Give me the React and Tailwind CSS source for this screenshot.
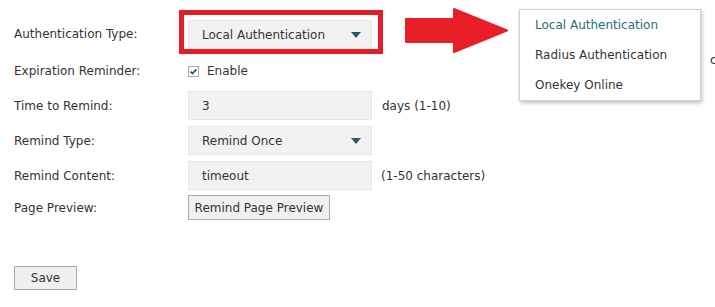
import React from 'react';

const Caret = () => (
  <svg width="10" height="6" viewBox="0 0 10 6" className="shrink-0">
    <polygon points="0,0 10,0 5,6" fill="#1f5f63" />
  </svg>
);

function Field({ children, className = '' }) {
  return (
    <div className={`flex h-[29px] w-[184px] items-center border border-[#e6e6e6] bg-[#f2f2f2] pl-[13px] pr-[10px] ${className}`}>
      {children}
    </div>
  );
}

export default function App() {
  return (
    <div className="relative h-[307px] w-[715px] overflow-hidden bg-white font-['DejaVu_Sans',sans-serif] text-[12px] text-[#333]">
      <div className="flex flex-col pl-[14px] pt-[10px]">
        {/* Authentication type, highlighted */}
        <div className="flex items-start">
          <div className="mt-[10px] w-[165px] leading-[28px]">Authentication Type:</div>
          <div className="border-[5px] border-[#e31e27] pt-[5px] pl-[4px] pr-[6px]">
            <Field className="h-[28px] justify-between">
              <span>Local Authentication</span>
              <Caret />
            </Field>
          </div>
        </div>

        {/* Expiration reminder */}
        <div className="mt-[1px] flex h-[32px] items-center">
          <div className="w-[174px]">Expiration Reminder:</div>
          <svg width="11" height="11" viewBox="0 0 11 11" className="shrink-0">
            <rect x="0.5" y="0.5" width="10" height="10" fill="white" stroke="#a8a8a8" />
            <path d="M2.6 5.6 L4.5 7.5 L8.4 3.4" fill="none" stroke="#1f5f63" strokeWidth="1.8" />
          </svg>
          <span className="ml-[8px]">Enable</span>
        </div>

        <div className="mt-[4px] flex items-center">
          <div className="w-[174px]">Time to Remind:</div>
          <Field>3</Field>
          <span className="ml-[10px]">days (1-10)</span>
        </div>

        <div className="mt-[6px] flex items-center">
          <div className="w-[174px]">Remind Type:</div>
          <Field className="justify-between">
            <span>Remind Once</span>
            <Caret />
          </Field>
        </div>

        <div className="mt-[6px] flex items-center">
          <div className="w-[174px]">Remind Content:</div>
          <Field>timeout</Field>
          <span className="ml-[9px]">(1-50 characters)</span>
        </div>

        <div className="mt-[5px] flex items-center">
          <div className="w-[174px]">Page Preview:</div>
          <button className="h-[25px] w-[142px] border border-[#a9a9a9] bg-[#f0f0f0] text-[#333]">
            Remind Page Preview
          </button>
        </div>

        <div className="mt-[46px]">
          <button className="h-[24px] w-[63px] border border-[#a9a9a9] bg-[#f0f0f0] text-[#333]">Save</button>
        </div>
      </div>

      {/* hidden text peeking out at right edge */}
      <span className="absolute left-[710px] top-[51px]">c</span>

      {/* red pointer arrow */}
      <svg className="absolute left-[400px] top-[3px]" width="115" height="56" viewBox="400 3 115 56">
        <polygon
          points="406,19 454,19 454,9 507,30.5 454,52 454,42 406,42"
          fill="#e81f28"
          stroke="#e81f28"
          strokeWidth="2"
          strokeLinejoin="round"
        />
      </svg>

      {/* open dropdown list */}
      <div className="absolute left-[519px] top-[9px] w-[182px] border border-[#d0d0d0] bg-white shadow-[1px_2px_4px_rgba(0,0,0,0.25)]">
        <div className="flex h-[30px] items-center pl-[15px] text-[#236f73]">Local Authentication</div>
        <div className="flex h-[30px] items-center pl-[15px]">Radius Authentication</div>
        <div className="flex h-[30px] items-center pl-[15px]">Onekey Online</div>
      </div>
    </div>
  );
}
